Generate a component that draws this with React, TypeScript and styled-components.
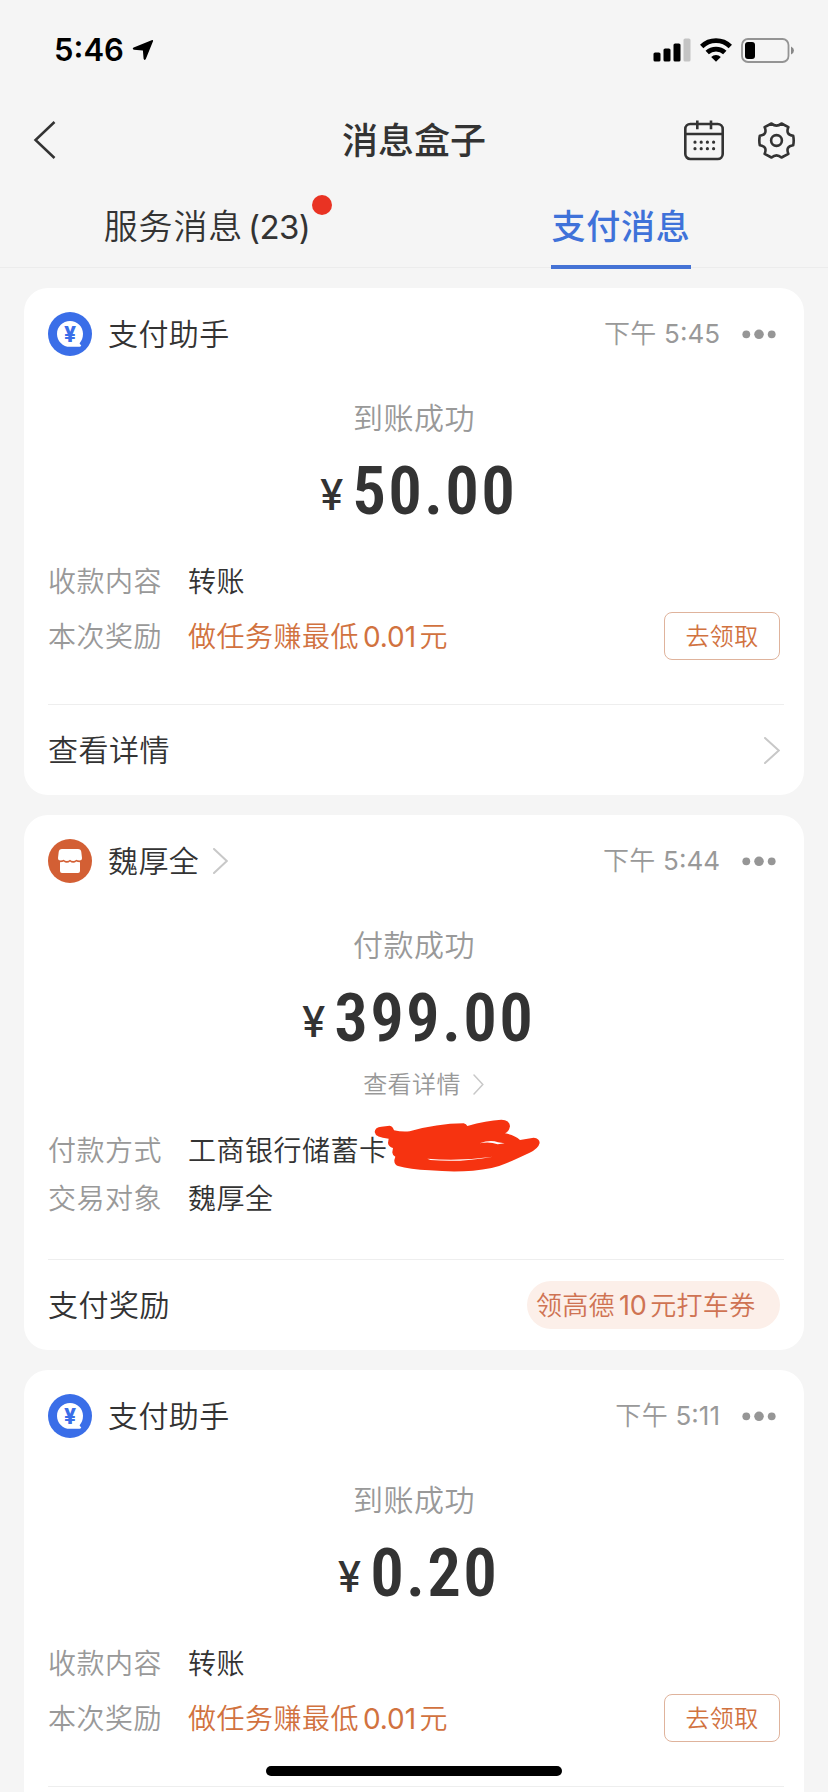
import React from "react";
import styled, { createGlobalStyle } from "styled-components";

const GlobalStyle = createGlobalStyle`
  * { box-sizing: border-box; }
  body {
    margin: 0;
    background: #f5f5f5;
    color: #333;
    font-family: Inter, "Noto Sans CJK SC", sans-serif;
    font-weight: 350;
  }
`;

const Screen = styled.div`
  position: relative;
  width: 828px;
  height: 1792px;
  overflow: hidden;
  background: #f5f5f5;
`;

const StatusBar = styled.header`
  display: flex;
  align-items: center;
  justify-content: space-between;
  height: 98px;
  padding: 2px 33px 0 54px;
  color: #000;
`;

const Clock = styled.div`
  display: flex;
  align-items: center;
  gap: 8px;
  font-size: 31px;
  font-weight: 600;
  line-height: 40px;
  letter-spacing: 0;
`;

const StatusIcons = styled.div`
  display: flex;
  align-items: center;
  gap: 9px;
`;

const NavBar = styled.nav`
  display: grid;
  grid-template-columns: 1fr auto 1fr;
  align-items: center;
  height: 84px;
  padding: 0 48px 0 33px;
`;

const Title = styled.h1`
  margin: 0 0 0 15px;
  padding-top: 2px;
  font-size: 36px;
  font-weight: 500;
  line-height: 50px;
`;

const NavActions = styled.div`
  display: flex;
  align-items: center;
  justify-content: flex-end;
  gap: 34px;
  margin-right: -15px;
`;

const IconButton = styled.button`
  display: flex;
  padding: 0;
  border: 0;
  background: none;
  color: inherit;
`;

const Tabs = styled.div`
  display: grid;
  grid-template-columns: 1fr 1fr;
  height: 86px;
  box-shadow: inset 0 -1px #ececec;
`;

const Tab = styled.div<{ $active?: boolean }>`
  display: flex;
  justify-content: center;
  align-items: stretch;
  color: ${(p) => (p.$active ? "#3f72d9" : "#333")};
  font-weight: ${(p) => (p.$active ? 500 : 350)};
`;

const TabLabel = styled.span<{ $active?: boolean }>`
  position: relative;
  padding-top: 3px;
  font-size: 34px;
  line-height: 83px;
  letter-spacing: 0.8px;
  box-shadow: ${(p) => (p.$active ? "inset 0 -4px #4573d5" : "none")};
`;

const Count = styled.span`
  margin-left: 5px;
  font-size: 33px;
  font-weight: 400;
  letter-spacing: -0.6px;
`;

const UnreadDot = styled.i`
  position: absolute;
  top: 13px;
  right: -22px;
  width: 20px;
  height: 20px;
  border-radius: 50%;
  background: #e93323;
`;

const Feed = styled.main`
  display: flex;
  flex-direction: column;
  gap: 20px;
  padding: 20px 24px;
`;

const Card = styled.article`
  display: flex;
  flex-direction: column;
  padding: 24px 20px 0 24px;
  border-radius: 24px;
  background: #fff;
`;

const CardHeader = styled.div`
  display: flex;
  align-items: center;
  height: 44px;
  padding-right: 8px;
`;

const Sender = styled.span`
  margin: 0 14px 0 16px;
  font-size: 30px;
  line-height: 44px;
  letter-spacing: 0.4px;
`;

const Time = styled.time`
  margin: 0 22px 0 auto;
  color: #999;
  font-size: 26px;
  line-height: 44px;
  letter-spacing: 0.3px;
`;

const Clocktime = styled.span`
  font-weight: 400;
  letter-spacing: 0;
`;

const Status = styled.div`
  margin: 42px 0 14px;
  padding-right: 4px;
  color: #999;
  font-size: 30px;
  line-height: 40px;
  letter-spacing: 0.5px;
  text-align: center;
`;

const Amount = styled.div`
  height: 76px;
  padding: 1px 0 0 5px;
  font-family: Roboto, sans-serif;
  font-size: 67px;
  font-weight: 600;
  font-stretch: 87%;
  line-height: 76px;
  letter-spacing: 2.2px;
  text-align: center;
  white-space: nowrap;
`;

const Currency = styled.span`
  margin-right: 9px;
  font-family: Inter, sans-serif;
  font-size: 42px;
  font-weight: 500;
  font-stretch: 100%;
  letter-spacing: 0;
  line-height: 40px;
  vertical-align: 4px;
`;

const DetailLink = styled.a`
  display: flex;
  justify-content: center;
  align-items: center;
  gap: 12px;
  margin-top: 14px;
  padding-left: 15px;
  color: #999;
  font-size: 24px;
  line-height: 31px;
  height: 30px;
  letter-spacing: 0.4px;
`;

const Rows = styled.dl<{ $linked?: boolean }>`
  display: flex;
  flex-direction: column;
  gap: ${(p) => (p.$linked ? 0 : 7)}px;
  margin: ${(p) => (p.$linked ? "27px 0 37px" : "29px 0 44px")};
`;

const Row = styled.div`
  display: flex;
  align-items: center;
  height: 48px;
  padding-right: 4px;
  font-size: 28px;
  line-height: 48px;
  letter-spacing: 0.5px;
`;

const Label = styled.dt`
  width: 140px;
  padding-top: 2px;
  color: #999;
`;

const Value = styled.dd<{ $accent?: boolean }>`
  position: relative;
  margin: 0;
  padding-top: 2px;
  color: ${(p) => (p.$accent ? "#d1723f" : "#333")};
`;

const Num = styled.span<{ $size: number }>`
  margin: 0 3.5px 0 4px;
  font-size: ${(p) => p.$size}px;
  font-weight: 400;
  letter-spacing: -0.1px;
`;

const ClaimButton = styled.button`
  width: 116px;
  height: 48px;
  margin-left: auto;
  padding: 2px 0 0;
  border: 1px solid #dfb39c;
  border-radius: 8px;
  background: none;
  color: #d1723f;
  font: inherit;
  font-size: 24px;
  letter-spacing: 0.4px;
  line-height: 44px;
`;

const CardFooter = styled.div`
  display: flex;
  align-items: center;
  justify-content: space-between;
  height: 91px;
  padding-right: 4px;
  border-top: 1px solid #eee;
  font-size: 30px;
  line-height: 90px;
  letter-spacing: 0.5px;
`;

const Coupon = styled.span`
  width: 253px;
  height: 48px;
  padding-left: 9px;
  border-radius: 24px;
  background: #fcefe9;
  color: #cf7353;
  font-size: 26px;
  line-height: 50px;
  letter-spacing: 0.3px;
  white-space: nowrap;
`;

const Scribble = styled.svg`
  position: absolute;
  top: -7px;
  left: 185px;
`;

const HomeIndicator = styled.div`
  position: absolute;
  left: 266px;
  bottom: 16px;
  width: 296px;
  height: 10px;
  border-radius: 5px;
  background: #000;
`;

const Chevron = ({ w, h, color = "#c8c8c8", stroke = 2 }: { w: number; h: number; color?: string; stroke?: number }) => (
  <svg width={w} height={h} viewBox={`0 0 ${w} ${h}`} fill="none" stroke={color} strokeWidth={stroke} strokeLinecap="round">
    <path d={`M1 1L${w - 1.2} ${h / 2}L1 ${h - 1}`} />
  </svg>
);

const AssistantIcon = () => (
  <svg width="44" height="44" viewBox="0 0 44 44">
    <circle cx="22" cy="22" r="22" fill="#3a6ee8" />
    <path d="M22 9C29.2 9 35 14.6 35 21.8C35 26 33.6 29 31.6 31.2C32 32.4 32.7 32.7 33.2 33.2C33.2 34.4 32 34.8 30.5 34.8H22C14.800 34.8 9 29 9 21.900C9 14.700 14.800 9 22 9Z" fill="#fff" />
    <text x="22" y="30" textAnchor="middle" fontFamily="Inter" fontSize="21" fontWeight="800" fill="#3a6ee8">¥</text>
  </svg>
);

const ShopIcon = () => (
  <svg width="44" height="44" viewBox="0 0 44 44">
    <circle cx="22" cy="22" r="22" fill="#d35f34" />
    <path d="M14 10H30Q33 10 33.300 13L34 19Q34 21.500 31.500 21.500Q29.500 21.500 28.300 20.700Q27 21.900 25.200 21.900Q23.300 21.900 22 20.700Q20.700 21.900 18.800 21.900Q17 21.900 15.700 20.700Q14.500 21.500 12.500 21.500Q10 21.500 10 19L10.700 13Q11 10 14 10Z" fill="#fff" />
    <path d="M12 23.300Q14.500 23.300 15.700 22.500Q17 23.800 18.800 23.800Q20.700 23.800 22 22.500Q23.300 23.800 25.200 23.800Q27 23.800 28.300 22.500Q29.500 23.300 32 23.300V32Q32 34 30 34H14Q12 34 12 32Z" fill="#fff" />
  </svg>
);

const MoreIcon = () => (
  <svg width="34" height="12" viewBox="0 0 34 12" fill="#969696">
    <circle cx="4.300" cy="6.300" r="3.900" />
    <circle cx="17" cy="6.300" r="4.800" />
    <circle cx="29.700" cy="6.300" r="3.900" />
  </svg>
);

const CalendarIcon = () => (
  <svg width="40" height="41" viewBox="0 0 40 41" fill="none" stroke="#333" strokeWidth="2.600">
    <rect x="1.300" y="4" width="37.400" height="35" rx="5" />
    <path d="M1.300 14H38.700M13.300 0.500V9.300M27 0.500V9.300" />
    <path d="M11 22.200H31M11 28.700H31" strokeWidth="3.200" strokeLinecap="round" strokeDasharray="0 6.200" />
  </svg>
);

const GearIcon = () => (
  <svg width="37" height="37" viewBox="-18.500 -18.500 37 37" fill="none" stroke="#333" strokeWidth="2.600" strokeLinejoin="round">
    <path d="M-5 -17Q0 -12.600 5 -17L11.900 -13.400C9.600 -8 11.800 -5.400 16.700 -4.800Q17.700 0 16.700 4.800C11.800 5.400 9.600 8 11.900 13.400L5 17Q0 12.600 -5 17L-11.900 13.400C-9.600 8 -11.800 5.400 -16.700 4.800Q-17.700 0 -16.700 -4.800C-11.800 -5.400 -9.600 -8 -11.900 -13.400Z" />
    <circle r="5.400" />
  </svg>
);

const StatusGlyphs = () => (
  <StatusIcons>
    <svg width="38" height="24" viewBox="0 0 38 24">
      <rect x="0.500" y="14.500" width="7" height="9" rx="1.600" />
      <rect x="10.500" y="10.500" width="7" height="13" rx="1.600" />
      <rect x="20.500" y="5.500" width="7" height="18" rx="1.600" />
      <rect x="30.500" y="0.500" width="7" height="23" rx="1.600" fill="#c4c4c4" />
    </svg>
    <svg width="32" height="24" viewBox="0 0 32 24" fill="none" stroke="#000" strokeWidth="4.800">
      <path d="M1.700 8.500A20.500 20.500 0 0 1 30.300 8.500" />
      <path d="M7.200 14.600A12.700 12.700 0 0 1 24.800 14.600" />
      <path d="M16 23.800L11.200 19A6.800 6.800 0 0 1 20.800 19Z" fill="#000" stroke="none" />
    </svg>
    <svg width="54" height="25" viewBox="0 0 54 25">
      <rect x="1" y="1" width="46.500" height="23" rx="6" fill="none" stroke="#949494" strokeWidth="1.800" />
      <rect x="4" y="4" width="10" height="17" rx="3" />
      <path d="M50 8.500Q53 10 53 12.500Q53 15 50 16.500Z" fill="#888" />
    </svg>
  </StatusIcons>
);

const Header = ({ icon, name, time, linked }: { icon: React.ReactNode; name: string; time: string; linked?: boolean }) => (
  <CardHeader>
    {icon}
    <Sender>{name}</Sender>
    {linked && <Chevron w={15} h={26} />}
    <Time>
      下午 <Clocktime>{time}</Clocktime>
    </Time>
    <MoreIcon />
  </CardHeader>
);

const Total = ({ value }: { value: string }) => (
  <Amount>
    <Currency>¥</Currency>
    {value}
  </Amount>
);

const IncomeCard = ({ time, amount, footer }: { time: string; amount: string; footer?: string }) => (
  <Card>
    <Header icon={<AssistantIcon />} name="支付助手" time={time} />
    <Status>到账成功</Status>
    <Total value={amount} />
    <Rows>
      <Row>
        <Label>收款内容</Label>
        <Value>转账</Value>
      </Row>
      <Row>
        <Label>本次奖励</Label>
        <Value $accent>
          做任务赚最低<Num $size={28}>0.01</Num>元
        </Value>
        <ClaimButton>去领取</ClaimButton>
      </Row>
    </Rows>
    <CardFooter>
      {footer && (
        <>
          <span>{footer}</span>
          <Chevron w={16} h={27} />
        </>
      )}
    </CardFooter>
  </Card>
);

export default function App() {
  return (
    <Screen>
      <GlobalStyle />
      <StatusBar>
        <Clock>
          5:46
          <svg width="22" height="22" viewBox="0 0 22 22">
            <path d="M19.600 1.200Q21.600 .4 20.900 2.600L13.800 20Q12.300 22 11.600 19.800L10.900 11.500L2 10.800Q-.3 10 1.700 8.600Z" />
          </svg>
        </Clock>
        <StatusGlyphs />
      </StatusBar>
      <NavBar>
        <IconButton aria-label="返回">
          <svg width="24" height="40" viewBox="0 0 24 40" fill="none" stroke="#333" strokeWidth="2.500">
            <path d="M21.500 2L2.500 20L21.500 38" />
          </svg>
        </IconButton>
        <Title>消息盒子</Title>
        <NavActions>
          <IconButton aria-label="日历"><CalendarIcon /></IconButton>
          <IconButton aria-label="设置"><GearIcon /></IconButton>
        </NavActions>
      </NavBar>
      <Tabs>
        <Tab>
          <TabLabel>
            服务消息<Count>(23)</Count>
            <UnreadDot />
          </TabLabel>
        </Tab>
        <Tab $active>
          <TabLabel $active>支付消息</TabLabel>
        </Tab>
      </Tabs>
      <Feed>
        <IncomeCard time="5:45" amount="50.00" footer="查看详情" />
        <Card>
          <Header icon={<ShopIcon />} name="魏厚全" time="5:44" linked />
          <Status>付款成功</Status>
          <Total value="399.00" />
          <DetailLink>
            查看详情
            <Chevron w={11} h={21} stroke={1.5} />
          </DetailLink>
          <Rows $linked>
            <Row>
              <Label>付款方式</Label>
              <Value>
                工商银行储蓄卡
                <Scribble width="169" height="55" viewBox="130 55 507 165">
                  <path
                    fill="#f63310"
                    d="M135 97Q136 82 155 81L180 78Q190 80 193 92Q215 97 240 95Q320 72 402 71Q410 73 413 79Q470 62 515 60Q540 61 541 80Q538 96 526 101Q555 106 571 121L612 114Q630 116 630 130Q626 147 600 159Q555 180 530 191Q490 209 430 213Q370 218 300 212Q240 209 205 199Q193 195 194 181L197 171Q187 165 188 157L190 145Q176 141 175 130L177 117Q137 114 135 97Z"
                  />
                  <path fill="#fff" d="M293 177Q390 185 490 171Q395 189 302 181ZM450 131Q482 119 505 128L525 131L504 134Q480 125 450 131Z" />
                </Scribble>
              </Value>
            </Row>
            <Row>
              <Label>交易对象</Label>
              <Value>魏厚全</Value>
            </Row>
          </Rows>
          <CardFooter>
            <span>支付奖励</span>
            <Coupon>
              领高德<Num $size={27}>10</Num>元打车券
            </Coupon>
          </CardFooter>
        </Card>
        <IncomeCard time="5:11" amount="0.20" />
      </Feed>
      <HomeIndicator />
    </Screen>
  );
}
